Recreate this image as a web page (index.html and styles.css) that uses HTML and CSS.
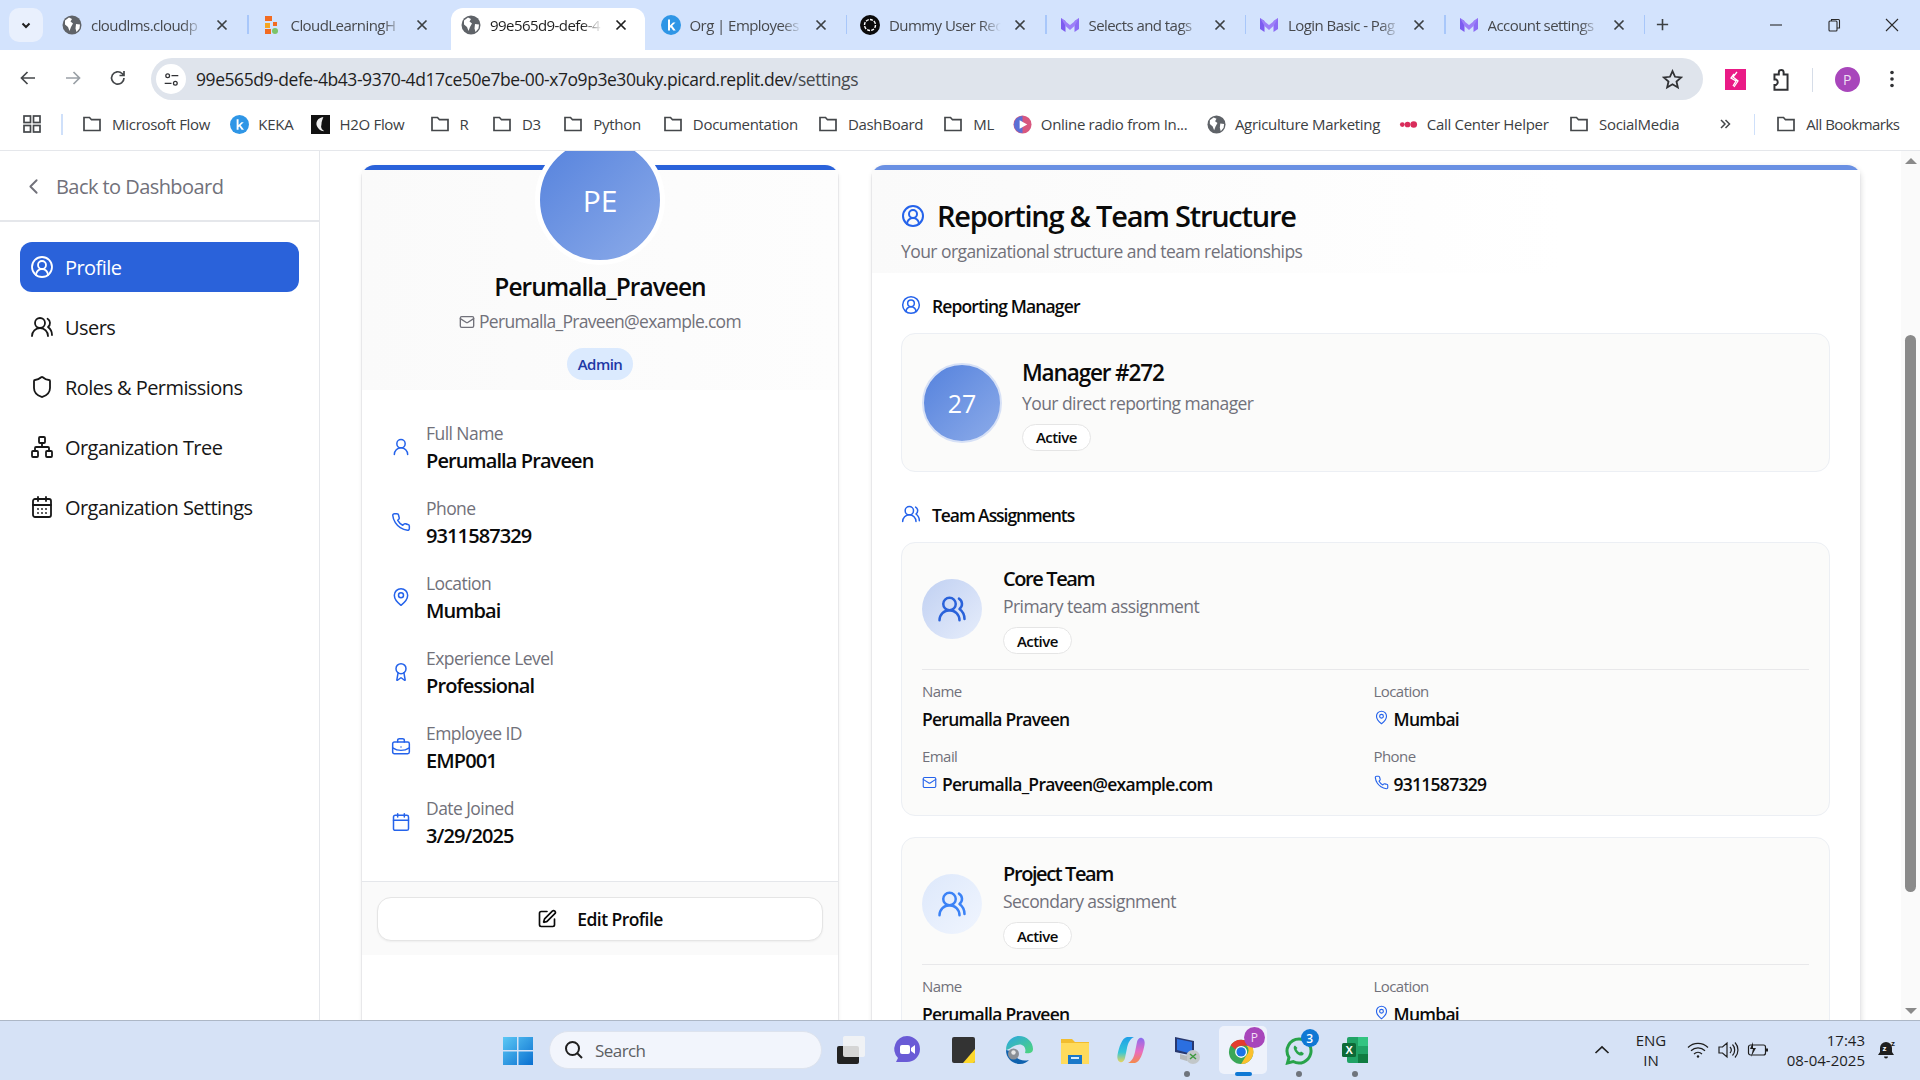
FILE: index.html
```html
<!DOCTYPE html>
<html lang="en">
<head>
<meta charset="utf-8">
<title>Settings</title>
<link rel="stylesheet" href="styles.css">
</head>
<body>
<svg class="sprite" xmlns="http://www.w3.org/2000/svg">
  <symbol id="i-circle-user" viewBox="0 0 24 24"><path d="M18 20a6 6 0 0 0-12 0"/><circle cx="12" cy="10" r="4"/><circle cx="12" cy="12" r="10"/></symbol>
  <symbol id="i-users" viewBox="0 0 24 24"><path d="M18 21a8 8 0 0 0-16 0"/><circle cx="10" cy="8" r="5"/><path d="M22 20c0-3.37-2-6.5-4-8a5 5 0 0 0-.45-8.3"/></symbol>
  <symbol id="i-shield" viewBox="0 0 24 24"><path d="M20 13c0 5-3.5 7.5-7.66 8.95a1 1 0 0 1-.67-.01C7.5 20.5 4 18 4 13V6a1 1 0 0 1 1-1c2 0 4.5-1.2 6.24-2.72a1.17 1.17 0 0 1 1.52 0C14.51 3.81 17 5 19 5a1 1 0 0 1 1 1z"/></symbol>
  <symbol id="i-network" viewBox="0 0 24 24"><rect x="16" y="16" width="6" height="6" rx="1"/><rect x="2" y="16" width="6" height="6" rx="1"/><rect x="9" y="2" width="6" height="6" rx="1"/><path d="M5 16v-3a1 1 0 0 1 1-1h12a1 1 0 0 1 1 1v3"/><path d="M12 12V8"/></symbol>
  <symbol id="i-calendar-days" viewBox="0 0 24 24"><path d="M8 2v4"/><path d="M16 2v4"/><rect width="18" height="18" x="3" y="4" rx="2"/><path d="M3 10h18"/><path d="M8 14h.01"/><path d="M12 14h.01"/><path d="M16 14h.01"/><path d="M8 18h.01"/><path d="M12 18h.01"/><path d="M16 18h.01"/></symbol>
  <symbol id="i-user" viewBox="0 0 24 24"><circle cx="12" cy="8" r="5"/><path d="M20 21a8 8 0 0 0-16 0"/></symbol>
  <symbol id="i-phone" viewBox="0 0 24 24"><path d="M22 16.92v3a2 2 0 0 1-2.18 2 19.79 19.79 0 0 1-8.63-3.07 19.5 19.5 0 0 1-6-6 19.79 19.79 0 0 1-3.07-8.67A2 2 0 0 1 4.11 2h3a2 2 0 0 1 2 1.72 12.84 12.84 0 0 0 .7 2.81 2 2 0 0 1-.45 2.11L8.09 9.91a16 16 0 0 0 6 6l1.27-1.27a2 2 0 0 1 2.11-.45 12.84 12.84 0 0 0 2.81.7A2 2 0 0 1 22 16.92z"/></symbol>
  <symbol id="i-pin" viewBox="0 0 24 24"><path d="M20 10c0 6-8 12-8 12s-8-6-8-12a8 8 0 0 1 16 0Z"/><circle cx="12" cy="10" r="3"/></symbol>
  <symbol id="i-award" viewBox="0 0 24 24"><path d="m15.477 12.89 1.515 8.526a.5.5 0 0 1-.81.47l-3.58-2.687a1 1 0 0 0-1.197 0l-3.586 2.686a.5.5 0 0 1-.81-.469l1.514-8.526"/><circle cx="12" cy="8" r="6"/></symbol>
  <symbol id="i-briefcase" viewBox="0 0 24 24"><path d="M12 12h.01"/><path d="M16 6V4a2 2 0 0 0-2-2h-4a2 2 0 0 0-2 2v2"/><path d="M22 13a18.15 18.15 0 0 1-20 0"/><rect width="20" height="14" x="2" y="6" rx="2"/></symbol>
  <symbol id="i-calendar" viewBox="0 0 24 24"><path d="M8 2v4"/><path d="M16 2v4"/><rect width="18" height="18" x="3" y="4" rx="2"/><path d="M3 10h18"/></symbol>
  <symbol id="i-mail" viewBox="0 0 24 24"><rect width="20" height="16" x="2" y="4" rx="2"/><path d="m22 7-8.97 5.7a1.94 1.94 0 0 1-2.06 0L2 7"/></symbol>
  <symbol id="i-pen" viewBox="0 0 24 24"><path d="M12 3H5a2 2 0 0 0-2 2v14a2 2 0 0 0 2 2h14a2 2 0 0 0 2-2v-7"/><path d="M18.375 2.625a1 1 0 0 1 3 3l-9.013 9.014a2 2 0 0 1-.853.505l-2.873.84a.5.5 0 0 1-.62-.62l.84-2.873a2 2 0 0 1 .506-.852z"/></symbol>
  <symbol id="i-chevron" viewBox="0 0 24 24"><path d="m15 18-6-6 6-6"/></symbol>
  <symbol id="i-close" viewBox="0 0 16 16"><path d="M3.500 3.500l9 9M12.500 3.500l-9 9"/></symbol>
  <symbol id="i-folder" viewBox="0 0 20 20"><path d="M2 16.500V3.500h5.500l2 2.200H18v10.800z"/></symbol>
  <symbol id="f-globe" viewBox="0 0 20 20"><circle cx="10" cy="10" r="9.500" fill="#5f6368"/><path d="M3 5.500l4-3 3 1.500-1.500 2.500 2.500 2-2 3.500-1.500 4-1.500-4-3-2.500z M14 9l4 .5-.5 4-3 3.500-1-3.500z" fill="#fff"/></symbol>
  <symbol id="f-k" viewBox="0 0 20 20"><circle cx="10" cy="10" r="10" fill="#2f96e6"/><path d="M7 4.500h2v6l3-3h2.500l-3.300 3.300 3.500 4.700h-2.500l-2.400-3.300-.8.8v2.500H7z" fill="#fff"/></symbol>
  <symbol id="f-m" viewBox="0 0 20 20"><path d="M1 3l4.500 3v11L1 14z" fill="#7c5cf0"/><path d="M19 3l-4.500 3v11l4.500-3z" fill="#8c6cf5"/><path d="M1 3l9 7 9-7-4.500 8L10 15l-4.500-4z" fill="#9d7ff8"/></symbol>
</svg>

<header class="tabstrip">
  <button class="tablist"><svg class="tl-chev" viewBox="0 0 12 12"><path d="M2.500 4.500L6 8l3.500-3.500"/></svg></button>
  <div class="tabs">
    <div class="tab sep"><svg class="fav"><use href="#f-globe"/></svg><span class="tab-t">cloudlms.cloudp</span><svg class="x"><use href="#i-close"/></svg></div>
    <div class="tab"><svg class="fav" viewBox="0 0 20 20"><rect x="3" y="1" width="7" height="5" fill="#f26b21"/><rect x="3" y="8" width="5" height="5" fill="#f5a623"/><rect x="3" y="14" width="6" height="5" fill="#f26b21"/><circle cx="13" cy="16" r="3" fill="#7cc46a"/><rect x="11" y="7" width="4" height="4" fill="#f26b21"/></svg><span class="tab-t">CloudLearningH</span><svg class="x"><use href="#i-close"/></svg></div>
    <div class="tab active"><svg class="fav"><use href="#f-globe"/></svg><span class="tab-t">99e565d9-defe-4</span><svg class="x"><use href="#i-close"/></svg></div>
    <div class="tab sep"><svg class="fav"><use href="#f-k"/></svg><span class="tab-t">Org | Employees</span><svg class="x"><use href="#i-close"/></svg></div>
    <div class="tab sep"><svg class="fav" viewBox="0 0 20 20"><circle cx="10" cy="10" r="10" fill="#0b0b0b"/><circle cx="10" cy="10" r="5.500" fill="none" stroke="#fff" stroke-width="1.400" stroke-dasharray="3 1.200"/></svg><span class="tab-t">Dummy User Rec</span><svg class="x"><use href="#i-close"/></svg></div>
    <div class="tab sep"><svg class="fav"><use href="#f-m"/></svg><span class="tab-t">Selects and tags</span><svg class="x"><use href="#i-close"/></svg></div>
    <div class="tab sep"><svg class="fav"><use href="#f-m"/></svg><span class="tab-t">Login Basic - Pag</span><svg class="x"><use href="#i-close"/></svg></div>
    <div class="tab sep"><svg class="fav"><use href="#f-m"/></svg><span class="tab-t">Account settings</span><svg class="x"><use href="#i-close"/></svg></div>
  </div>
  <svg class="newtab" viewBox="0 0 16 16"><path d="M8 2v12M2 8h12"/></svg>
  <div class="winctl">
    <svg class="wc" viewBox="0 0 16 16"><path d="M2 8h12"/></svg>
    <svg class="wc" viewBox="0 0 16 16"><rect x="3" y="4" width="8" height="10" rx="1"/><path d="M5.500 4V2.500h7a1 1 0 0 1 1 1V11H11"/></svg>
    <svg class="wc" viewBox="0 0 16 16"><path d="M2 2l12 12M14 2L2 14"/></svg>
  </div>
</header>

<nav class="toolbar">
  <svg class="navi back" viewBox="0 0 20 20"><path d="M17 10H4M9.500 4L3.500 10l6 6"/></svg>
  <svg class="navi fwd" viewBox="0 0 20 20"><path d="M3 10h13M10.500 4l6 6-6 6"/></svg>
  <svg class="navi reload" viewBox="0 0 20 20"><path d="M16 10a6.200 6.200 0 1 1-1.900-4.500L16 7.300M16 3v4.500h-4.500"/></svg>
  <div class="omnibox">
    <span class="chip"><svg class="chip-i" viewBox="0 0 20 20"><circle cx="5.500" cy="5.500" r="2.200"/><path d="M10 5.500h8M2 14.500h8"/><circle cx="14.500" cy="14.500" r="2.200"/></svg></span>
    <span class="url">99e565d9-defe-4b43-9370-4d17ce50e7be-00-x7o9p3e30uky.picard.replit.dev<span class="url-path">/settings</span></span>
    <svg class="star" viewBox="0 0 20 20"><path d="M10 2l2.400 5.400 5.800.6-4.400 3.900 1.300 5.700L10 14.600l-5.100 3 1.300-5.700L1.800 8l5.800-.6z"/></svg>
  </div>
  <svg class="ext-pink" viewBox="0 0 21 21"><rect width="21" height="21" fill="#ea1a86"/><path d="M12 3L8 8l5 4-4 6M9 5L6 9l5 3-3 5" fill="none" stroke="#fff" stroke-width="1.300"/></svg>
  <svg class="puzzle" viewBox="0 0 22 22"><path d="M5 6h4V4a2.200 2.200 0 0 1 4.400 0v2H17v14H5v-4.500h1.500a2.800 2.800 0 0 0 0-5H5z"/></svg>
  <span class="tb-sep"></span>
  <span class="avatar-p">P</span>
  <svg class="kebab" viewBox="0 0 6 20"><circle cx="3" cy="3.500" r="1.800"/><circle cx="3" cy="10" r="1.800"/><circle cx="3" cy="16.500" r="1.800"/></svg>
</nav>

<div class="bookmarks">
  <svg class="apps" viewBox="0 0 18 18"><rect x="1" y="1" width="6.500" height="6.500"/><rect x="10.500" y="1" width="6.500" height="6.500"/><rect x="1" y="10.500" width="6.500" height="6.500"/><rect x="10.500" y="10.500" width="6.500" height="6.500"/></svg>
  <span class="bm-sep"></span>
  <span class="bm b1"><svg class="bf"><use href="#i-folder"/></svg>Microsoft Flow</span>
  <span class="bm b2"><svg class="bi"><use href="#f-k"/></svg>KEKA</span>
  <span class="bm b3"><svg class="bi" viewBox="0 0 20 20"><rect width="20" height="20" fill="#111"/><path d="M13 2c-6 1-8 5-7 9 1 3 4 6 8 6-3-2-4-4-3-7 0-3 1-5 2-8z" fill="#eee"/></svg>H2O Flow</span>
  <span class="bm b4"><svg class="bf"><use href="#i-folder"/></svg>R</span>
  <span class="bm b5"><svg class="bf"><use href="#i-folder"/></svg>D3</span>
  <span class="bm b6"><svg class="bf"><use href="#i-folder"/></svg>Python</span>
  <span class="bm b7"><svg class="bf"><use href="#i-folder"/></svg>Documentation</span>
  <span class="bm b8"><svg class="bf"><use href="#i-folder"/></svg>DashBoard</span>
  <span class="bm b9"><svg class="bf"><use href="#i-folder"/></svg>ML</span>
  <span class="bm b10"><svg class="bi" viewBox="0 0 20 20"><circle cx="10" cy="10" r="9.500" fill="#d8577f"/><path d="M1 10a9 9 0 0 1 9-9v18a9 9 0 0 1-9-9z" fill="#5b6fd6"/><path d="M7 5.500l8 4.500-8 4.500z" fill="#fff"/></svg>Online radio from In...</span>
  <span class="bm b11"><svg class="bi"><use href="#f-globe"/></svg>Agriculture Marketing</span>
  <span class="bm b12"><svg class="bi" viewBox="0 0 20 20"><circle cx="3.500" cy="10" r="2.500" fill="#d92c5b"/><circle cx="9" cy="10" r="3" fill="#d92c5b"/><circle cx="15.500" cy="10" r="3.500" fill="#d92c5b"/></svg>Call Center Helper</span>
  <span class="bm b13"><svg class="bf"><use href="#i-folder"/></svg>SocialMedia</span>
  <svg class="bm-more" viewBox="0 0 12 12"><path d="M2 2l4 4-4 4M6.500 2l4 4-4 4"/></svg>
  <span class="bm-sep sep2"></span>
  <span class="bm b14"><svg class="bf"><use href="#i-folder"/></svg>All Bookmarks</span>
</div>

<div class="app">
  <aside class="sidebar">
    <div class="back-row"><svg class="ic i-back"><use href="#i-chevron"/></svg><span>Back to Dashboard</span></div>
    <div class="side-nav">
      <a class="nav-item on"><svg class="ic i-nav"><use href="#i-circle-user"/></svg>Profile</a>
      <a class="nav-item"><svg class="ic i-nav"><use href="#i-users"/></svg>Users</a>
      <a class="nav-item"><svg class="ic i-nav"><use href="#i-shield"/></svg>Roles &amp; Permissions</a>
      <a class="nav-item"><svg class="ic i-nav"><use href="#i-network"/></svg>Organization Tree</a>
      <a class="nav-item"><svg class="ic i-nav"><use href="#i-calendar-days"/></svg>Organization Settings</a>
    </div>
  </aside>

  <main class="main">
    <section class="card left">
      <div class="prof-head">
        <div class="prof-av">PE</div>
        <h2 class="prof-name">Perumalla_Praveen</h2>
        <p class="prof-mail"><svg class="ic i-mail-h"><use href="#i-mail"/></svg>Perumalla_Praveen@example.com</p>
        <span class="role">Admin</span>
      </div>
      <div class="prof-rows">
        <div class="row"><svg class="ic i-blue"><use href="#i-user"/></svg><div><div class="lab">Full Name</div><div class="val">Perumalla Praveen</div></div></div>
        <div class="row"><svg class="ic i-blue"><use href="#i-phone"/></svg><div><div class="lab">Phone</div><div class="val">9311587329</div></div></div>
        <div class="row"><svg class="ic i-blue"><use href="#i-pin"/></svg><div><div class="lab">Location</div><div class="val">Mumbai</div></div></div>
        <div class="row"><svg class="ic i-blue"><use href="#i-award"/></svg><div><div class="lab">Experience Level</div><div class="val">Professional</div></div></div>
        <div class="row"><svg class="ic i-blue"><use href="#i-briefcase"/></svg><div><div class="lab">Employee ID</div><div class="val">EMP001</div></div></div>
        <div class="row"><svg class="ic i-blue"><use href="#i-calendar"/></svg><div><div class="lab">Date Joined</div><div class="val">3/29/2025</div></div></div>
      </div>
      <div class="prof-foot">
        <button class="edit"><svg class="ic i-edit"><use href="#i-pen"/></svg>Edit Profile</button>
      </div>
    </section>

    <section class="card right">
      <div class="r-head">
        <h1 class="r-title"><svg class="ic i-title"><use href="#i-circle-user"/></svg>Reporting &amp; Team Structure</h1>
        <p class="r-sub">Your organizational structure and team relationships</p>
      </div>
      <div class="r-body">
        <h3 class="sec"><svg class="ic i-sec"><use href="#i-circle-user"/></svg>Reporting Manager</h3>
        <div class="box mgr">
          <div class="mgr-av">27</div>
          <div class="who">
            <div class="mgr-name">Manager #272</div>
            <div class="desc">Your direct reporting manager</div>
            <span class="pill">Active</span>
          </div>
        </div>

        <h3 class="sec sec2"><svg class="ic i-sec"><use href="#i-users"/></svg>Team Assignments</h3>
        <div class="box team">
          <div class="team-head">
            <div class="team-av a1"><svg class="ic i-team"><use href="#i-users"/></svg></div>
            <div class="who">
              <div class="team-name">Core Team</div>
              <div class="desc">Primary team assignment</div>
              <span class="pill">Active</span>
            </div>
          </div>
          <div class="grid">
            <div><div class="g-lab">Name</div><div class="g-val">Perumalla Praveen</div></div>
            <div><div class="g-lab">Location</div><div class="g-val"><svg class="ic i-g"><use href="#i-pin"/></svg>Mumbai</div></div>
            <div><div class="g-lab">Email</div><div class="g-val"><svg class="ic i-g"><use href="#i-mail"/></svg>Perumalla_Praveen@example.com</div></div>
            <div><div class="g-lab">Phone</div><div class="g-val"><svg class="ic i-g"><use href="#i-phone"/></svg>9311587329</div></div>
          </div>
        </div>

        <div class="box team second">
          <div class="team-head">
            <div class="team-av a2"><svg class="ic i-team lighter"><use href="#i-users"/></svg></div>
            <div class="who">
              <div class="team-name">Project Team</div>
              <div class="desc">Secondary assignment</div>
              <span class="pill">Active</span>
            </div>
          </div>
          <div class="grid">
            <div><div class="g-lab">Name</div><div class="g-val">Perumalla Praveen</div></div>
            <div><div class="g-lab">Location</div><div class="g-val"><svg class="ic i-g"><use href="#i-pin"/></svg>Mumbai</div></div>
          </div>
        </div>
      </div>
    </section>
  </main>

  <div class="scrollbar">
    <span class="arrow up"></span>
    <span class="thumb"></span>
    <span class="arrow down"></span>
  </div>
</div>

<footer class="taskbar">
  <svg class="winlogo" viewBox="0 0 30 30"><defs><linearGradient id="wl" x1="0" y1="0" x2="1" y2="1"><stop offset="0" stop-color="#5cc8f5"/><stop offset="1" stop-color="#0a6fd0"/></linearGradient></defs><path d="M0 1h14v13H0zM15.500 1H30v13H15.500zM0 15.500h14V29H0zM15.500 15.500H30V29H15.500z" fill="url(#wl)"/></svg>
  <div class="search"><svg class="s-ic" viewBox="0 0 20 20"><circle cx="8.500" cy="8.500" r="6.500"/><path d="M13 13l5 5"/></svg>Search</div>
  <div class="apps-row">
    <span class="cell"><svg class="tbi" viewBox="0 0 30 30"><rect x="1" y="11" width="22" height="18" rx="2" fill="#222"/><rect x="7" y="1" width="22" height="21" rx="2" fill="#f4f4f4" opacity=".85"/></svg></span>
    <span class="cell"><svg class="tbi" viewBox="0 0 30 30"><path d="M15 1a13 13 0 0 1 0 26H4l2-4A13 13 0 0 1 15 1z" fill="#6a5bd6"/><rect x="8" y="10" width="10" height="9" rx="2" fill="#fff"/><path d="M19 13l4-3v9l-4-3z" fill="#fff"/></svg></span>
    <span class="cell"><svg class="tbi" viewBox="0 0 30 30"><rect x="4" y="2" width="23" height="26" rx="2" fill="#333"/><path d="M27 14v12a2 2 0 0 1-2 2H15z" fill="#fdd72c"/></svg></span>
    <span class="cell"><svg class="tbi" viewBox="0 0 30 30"><defs><linearGradient id="ed" x1="0" y1="0" x2="1" y2="1"><stop offset="0" stop-color="#2ba5e4"/><stop offset="1" stop-color="#4fd67a"/></linearGradient></defs><path d="M2 15C2 6 9 1 15 1c8 0 14 6 14 13 0 4-4 5-8 4 2-6-3-10-8-8-5 1-8 5-11 5z" fill="url(#ed)"/><path d="M2 15c0 8 6 14 14 14 4 0 7-2 9-4-7 2-14-1-15-8z" fill="#0f62ae"/><circle cx="9.500" cy="19" r="5.500" fill="#8a8f96"/><circle cx="9.500" cy="17.500" r="2.200" fill="#e8e8e8"/></svg></span>
    <span class="cell"><svg class="tbi" viewBox="0 0 30 30"><path d="M1 4h11l3 3h14v22H1z" fill="#f2bd2f"/><path d="M1 8h28v21H1z" fill="#ffdb5c"/><rect x="8" y="20" width="14" height="9" fill="#1a78c9"/><rect x="11" y="22" width="8" height="2" fill="#d7ecfb"/></svg></span>
    <span class="cell"><svg class="tbi" viewBox="0 0 30 30"><defs><linearGradient id="co1" x1="0" y1="0" x2="0" y2="1"><stop offset="0" stop-color="#1f9fe8"/><stop offset=".6" stop-color="#35c6d8"/><stop offset="1" stop-color="#e8d45a"/></linearGradient><linearGradient id="co2" x1="0" y1="0" x2="0" y2="1"><stop offset="0" stop-color="#8a6cf0"/><stop offset=".55" stop-color="#e86cc0"/><stop offset="1" stop-color="#f58a4a"/></linearGradient></defs><path d="M11 2h7c-4 2-6 6-7 11l-2 10c-.6 3-3 5-5 4-2.500-1-3-4-2.500-7C3 12 6 3 11 2z" fill="url(#co1)"/><path d="M19 28h-7c4-2 6-6 7-11l2-10c.6-3 3-5 5-4 2.500 1 3 4 2.500 7-1.500 8-4.500 17-9.500 18z" fill="url(#co2)"/></svg></span>
    <span class="cell"><svg class="tbi" viewBox="0 0 30 30"><path d="M3 2l19 4v15L3 17z" fill="#28386f"/><path d="M5 4l15 3v12L5 15z" fill="#2b6fe0"/><circle cx="21" cy="22" r="7" fill="#c2c7c9"/><path d="M18 24l6-5M18 19l6 5" stroke="#3d9a3f" stroke-width="1.500"/><path d="M8 19l7 2v5l-7-2z" fill="#b5b9bc"/></svg><i class="dot"></i></span>
    <span class="cell act"><svg class="tbi chrome" viewBox="0 0 32 32"><circle cx="14" cy="18" r="13" fill="#3aa757"/><path d="M14 5a13 13 0 0 1 11.300 6.500H14a6.500 6.500 0 0 0-6 4L2.800 11A13 13 0 0 1 14 5z" fill="#e33b2e"/><path d="M25.300 11.500A13 13 0 0 1 14 31l5.600-9.500a6.500 6.500 0 0 0 0-10z" fill="#fbc02d"/><circle cx="14" cy="18" r="6.400" fill="#fff"/><circle cx="14" cy="18" r="5" fill="#1a73e8"/></svg><b class="badge-p">P</b><i class="bar"></i></span>
    <span class="cell"><svg class="tbi" viewBox="0 0 30 30"><path d="M15 4a12 12 0 0 0-10 18.500L3.500 28l5.700-1.500A12 12 0 1 0 15 4z" fill="none" stroke="#28a34a" stroke-width="3"/><path d="M11 10.500c-2 1-1.500 3.500.5 6.500s5 4 6.500 3.500 2-2 1.500-2.500l-2.500-1.500-1 1c-1.500-.5-3-2-3.500-3.500l1-1z" fill="#28a34a"/></svg><b class="badge-n">3</b><i class="dot"></i></span>
    <span class="cell"><svg class="tbi" viewBox="0 0 30 30"><rect x="7" y="2" width="21" height="26" rx="2" fill="#21a366"/><rect x="18" y="2" width="10" height="9" fill="#33c481"/><rect x="18" y="19" width="10" height="9" fill="#107c41"/><rect x="2" y="8" width="14" height="14" rx="1.500" fill="#0d6a37"/><text x="9" y="19" class="xl">X</text></svg><i class="dot"></i></span>
  </div>
  <div class="tray">
    <svg class="tr-chev" viewBox="0 0 16 10"><path d="M1.500 8L8 2l6.500 6"/></svg>
    <div class="lang"><span>ENG</span><span>IN</span></div>
    <svg class="tr-ic wifi" viewBox="0 0 22 18"><path d="M1 6.500a14 14 0 0 1 20 0M4 9.800a10 10 0 0 1 14 0M7 13a6 6 0 0 1 8 0"/><circle cx="11" cy="15.500" r="1.200" class="fillc"/></svg>
    <svg class="tr-ic vol" viewBox="0 0 22 18"><path d="M2 6h3.500L10 2v14l-4.500-4H2zM13 6a4.500 4.500 0 0 1 0 6M15.500 3.500a8 8 0 0 1 0 11M18 1.500a11 11 0 0 1 0 15"/></svg>
    <svg class="tr-ic bat" viewBox="0 0 22 18"><rect x="1.500" y="4" width="17" height="10" rx="2"/><path d="M19 7.500h2v3h-2" class="fillc"/><path d="M6 1L3 8h3l-2 8 5-9H6z" class="fillc"/></svg>
    <div class="clock"><span>17:43</span><span>08-04-2025</span></div>
    <svg class="bell" viewBox="0 0 20 20"><path d="M10 2a6 6 0 0 0-6 6v4l-2 3h16l-2-3V8a6 6 0 0 0-6-6z"/><path d="M8 16.500a2 2 0 0 0 4 0z"/><text x="6.500" y="11" class="zz">z</text><text x="15" y="6" class="zz2">z</text></svg>
  </div>
</footer>
</body>
</html>
```

FILE: styles.css
```css
* { box-sizing: border-box; }
html, body { margin: 0; padding: 0; }
body {
  width: 1920px; height: 1080px; overflow: hidden;
  display: flex; flex-direction: column;
  font-family: "Open Sans", "Noto Sans", sans-serif;
  letter-spacing: -0.035em;
  color: #0a0a0a; background: #fff;
}
h1, h2, h3, p { margin: 0; font: inherit; letter-spacing: inherit; }
button { font: inherit; letter-spacing: inherit; color: inherit; }
.sprite { display: none; }

/* Tab strip */
.tabstrip { height: 50px; flex: none; background: #d3e3fd; display: flex; align-items: flex-start; position: relative; }
.tablist { width: 34px; height: 34px; margin: 8px 0 0 9px; padding: 0; border: 0; border-radius: 10px; background: #e9f0fd; display: flex; align-items: center; justify-content: center; }
.tl-chev { width: 12px; height: 12px; fill: none; stroke: #1f1f1f; stroke-width: 2; }
.tabs { display: flex; margin-left: 6px; height: 50px; }
.tab { width: 199.500px; height: 50px; display: flex; align-items: center; position: relative; padding: 0 0 0 13px; font-size: 15px; color: #47494d; }
.tab.sep::after { content: ""; position: absolute; right: 0; top: 15px; height: 19px; width: 1.500px; background: #a8c7fa; }
.tab.active { color: #1f1f1f; }
.tab.active::before { content: ""; position: absolute; left: 3px; right: 3px; top: 8px; bottom: 0; background: #fff; border-radius: 12px 12px 0 0; }
.tab.active > * { position: relative; z-index: 1; }
.fav { width: 20px; height: 20px; flex: none; }
.tab-t { width: 112px; margin-left: 9px; white-space: nowrap; overflow: hidden; -webkit-mask-image: linear-gradient(to right, #000 82%, transparent); mask-image: linear-gradient(to right, #000 82%, transparent); }
.x { width: 16px; height: 16px; margin-left: 11px; fill: none; stroke: #3c4043; stroke-width: 1.700; flex: none; }
.tab.active .x { stroke: #1f1f1f; }
.newtab { width: 15px; height: 15px; margin: 17px 0 0 10px; fill: none; stroke: #3c4043; stroke-width: 1.700; flex: none; }
.winctl { margin-left: auto; display: flex; padding: 17px 20px 0 0; gap: 42px; }
.wc { width: 16px; height: 16px; fill: none; stroke: #2b2b2b; stroke-width: 1.100; }

/* Toolbar */
.toolbar { height: 50px; flex: none; background: #fff; border-radius: 10px 10px 0 0; display: flex; align-items: flex-start; padding-top: 8px; position: relative; }
.navi { width: 20px; height: 20px; margin-top: 10px; fill: none; stroke: #44474a; stroke-width: 1.700; flex: none; }
.back { margin-left: 18px; }
.fwd { margin-left: 25px; stroke: #9aa0a6; }
.reload { margin-left: 25px; }
.omnibox { width: 1552px; height: 42px; margin-left: 23px; background: #dfe4ec; border-radius: 21px; display: flex; align-items: center; padding-left: 5px; }
.chip { width: 30px; height: 30px; border-radius: 50%; background: #fff; display: flex; align-items: center; justify-content: center; }
.chip-i { width: 17px; height: 17px; fill: none; stroke: #303134; stroke-width: 1.500; }
.url { margin-left: 10px; font-size: 17.500px; letter-spacing: -0.025em; color: #1f1f1f; white-space: nowrap; }
.url-path { color: #45484d; }
.star { width: 21px; height: 21px; margin-left: auto; margin-right: 20px; fill: none; stroke: #303134; stroke-width: 1.700; }
.ext-pink { width: 21px; height: 21px; margin: 11px 0 0 21.500px; flex: none; }
.puzzle { width: 24px; height: 24px; margin: 10px 0 0 23px; fill: none; stroke: #303134; stroke-width: 1.800; flex: none; }
.tb-sep { width: 1px; height: 24px; margin: 10px 0 0 19px; background: #d6dde8; flex: none; }
.avatar-p { width: 25px; height: 25px; margin: 9px 0 0 22px; border-radius: 50%; background: #a846bb; color: #eedff2; font-size: 14px; display: flex; align-items: center; justify-content: center; flex: none; }
.kebab { width: 6px; height: 20px; margin: 11px 0 0 29.500px; fill: #303134; flex: none; }

/* Bookmarks */
.bookmarks { height: 50px; flex: none; background: #fff; display: flex; align-items: center; padding-bottom: 2px; font-size: 15px; letter-spacing: -0.02em; color: #3c4043; position: relative; }
.apps { width: 18px; height: 18px; margin-left: 23px; fill: none; stroke: #44474a; stroke-width: 1.700; flex: none; }
.bm-sep { width: 1.500px; height: 21px; margin-left: 20px; background: #cfe0fa; flex: none; }
.bm { display: flex; align-items: center; white-space: nowrap; flex: none; }
.bf { width: 20px; height: 20px; fill: none; stroke: #44474a; stroke-width: 1.700; margin-right: 10px; flex: none; }
.bi { width: 19px; height: 19px; margin-right: 9px; flex: none; }
.b1 { margin-left: 19.600px; } .b2 { margin-left: 20.200px; } .b3 { margin-left: 18.100px; } .b4 { margin-left: 25.200px; } .b5 { margin-left: 23.400px; }
.b6 { margin-left: 22.500px; } .b7 { margin-left: 22px; } .b8 { margin-left: 20.100px; } .b9 { margin-left: 20.100px; } .b10 { margin-left: 18.800px; }
.b11 { margin-left: 19.500px; } .b12 { margin-left: 18.800px; } .b13 { margin-left: 20.500px; }
.bm-more { width: 12px; height: 12px; margin-left: 39.500px; fill: none; stroke: #44474a; stroke-width: 1.500; flex: none; }
.sep2 { margin-left: 23px; }
.b14 { margin-left: 21px; letter-spacing: -0.035em; }

/* App */
.app { flex: 1; min-height: 0; display: flex; border-top: 1px solid #e5e7eb; background: #fff; }
.ic { fill: none; stroke: currentColor; stroke-width: 2; stroke-linecap: round; stroke-linejoin: round; flex: none; }

.sidebar { width: 320px; flex: none; border-right: 1px solid #e5e7eb; background: #fff; }
.back-row { height: 71px; border-bottom: 2px solid #e5e7eb; display: flex; align-items: center; padding: 2px 0 0 21px; color: #71717a; font-size: 20px; }
.i-back { width: 25px; height: 25px; margin-right: 10px; stroke-width: 1.800; }
.side-nav { padding: 20px 20px 0; display: flex; flex-direction: column; gap: 10px; }
.nav-item { height: 50px; display: flex; align-items: center; gap: 11px; padding-left: 10px; font-size: 20px; border-radius: 12px; color: #171717; }
.nav-item.on { background: #2a62da; color: #fff; }
.i-nav { width: 24px; height: 24px; stroke-width: 1.800; }

.main { flex: 1; min-width: 0; overflow: hidden; display: grid; grid-template-columns: 478px 990px; column-gap: 32px; padding: 14px 0 0 41px; align-items: stretch; background: #fff; }
.card { background: #fff; border: 1px solid #e8e8ea; border-top: 5px solid #2a62da; border-radius: 14px 14px 0 0; box-shadow: 0 1px 4px rgba(0,0,0,.06); min-height: 900px; }
.right { border-top-color: #6a90e3; box-shadow: 1px 1px 5px rgba(0,0,0,.1); }

/* Left card */
.prof-head { height: 220px; background: linear-gradient(to right, #fafafa, #fdfdfd); display: flex; flex-direction: column; align-items: center; }
.prof-av { width: 130px; height: 130px; margin-top: -35px; flex: none; border: 5px solid #fff; border-radius: 50%; background: linear-gradient(135deg, #5582dd, #8cabe9); color: #fff; font-size: 30px; display: flex; align-items: center; justify-content: center; letter-spacing: 0; }
.prof-name { margin-top: 4px; font-size: 24.500px; line-height: 35px; font-weight: 600; letter-spacing: -0.04em; }
.prof-mail { margin-top: 5px; font-size: 17.500px; line-height: 25px; color: #71717a; display: flex; align-items: center; gap: 4px; letter-spacing: -0.04em; }
.i-mail-h { width: 16px; height: 16px; }
.role { margin-top: 14px; height: 32px; padding: 0 11px; border-radius: 16px; background: #dbeafe; color: #2138a5; font-size: 15px; font-weight: 600; display: flex; align-items: center; }
.prof-rows { padding: 31px 26px 0 29px; height: 491px; display: flex; flex-direction: column; gap: 20px; }
.row { display: flex; align-items: center; gap: 15px; height: 55px; }
.i-blue { width: 20px; height: 20px; margin-top: -4px; color: #2563eb; stroke-width: 1.800; }
.lab { font-size: 17.500px; line-height: 25px; color: #71717a; }
.val { font-size: 20px; line-height: 30px; font-weight: 600; letter-spacing: -0.045em; }
.prof-foot { border-top: 1px solid #e5e7eb; background: #fafafa; padding: 15px; height: 74px; }
.edit { width: 100%; height: 44px; background: #fff; border: 1px solid #e5e5e5; border-radius: 14px; font-size: 17.500px; font-weight: 600; display: flex; align-items: center; justify-content: center; gap: 20px; box-shadow: 0 1px 2px rgba(0,0,0,.05); padding: 0 0 0 6px; }
.i-edit { width: 20px; height: 20px; margin-left: -6px; }

/* Right card */
.r-head { height: 103px; padding: 28px 24px 0 30px; background: linear-gradient(to right, #fafafa, #fff 70%); }
.r-title { display: flex; align-items: center; gap: 12px; font-size: 29px; line-height: 36px; font-weight: 600; margin-left: -1px; letter-spacing: -0.043em; }
.i-title { width: 24px; height: 24px; color: #2563eb; }
.r-sub { margin-top: 5px; font-size: 17.500px; line-height: 25px; color: #71717a; margin-left: -1px; }
.r-body { padding: 21px 30px 0 29px; }
.sec { display: flex; align-items: center; gap: 11px; font-size: 17.500px; line-height: 25px; font-weight: 600; letter-spacing: -0.05em; }
.sec2 { margin-top: 31px; letter-spacing: -0.06em; }
.i-sec { width: 20px; height: 20px; color: #2563eb; stroke-width: 1.800; margin-top: -3px; }
.box { margin-top: 14px; border: 1px solid #eceff4; border-radius: 14px; background: #fbfbfa; }
.mgr { height: 139px; padding: 0 20px; display: flex; align-items: center; gap: 20px; }
.mgr-av { width: 80px; height: 80px; flex: none; border: 2px solid #d7e1f6; border-radius: 50%; background: linear-gradient(135deg, #5582dd, #8cabe9); color: #fff; font-size: 25px; display: flex; align-items: center; justify-content: center; letter-spacing: 0; }
.who { display: flex; flex-direction: column; align-items: flex-start; }
.mgr-name { padding-top: 2px; font-size: 22.500px; line-height: 32px; font-weight: 600; letter-spacing: -0.05em; }
.desc { margin-top: 2px; font-size: 17.500px; line-height: 25px; color: #71717a; }
.pill { margin-top: 8px; height: 27px; padding: 0 13px; border: 1px solid #e5e5e5; border-radius: 14px; background: #fff; font-size: 15px; font-weight: 600; display: flex; align-items: center; }
.team { height: 274px; padding: 22px 20px 0; overflow: hidden; }
.team.second { margin-top: 21px; height: 275px; }
.team-head { display: flex; align-items: center; gap: 21px; padding-bottom: 15px; border-bottom: 1px solid #e8e8ea; }
.team-name { font-size: 20px; line-height: 28px; font-weight: 600; letter-spacing: -0.07em; }
.team-head .desc { margin-top: 1px; }
.team-av { width: 60px; height: 60px; flex: none; margin-top: -2px; border-radius: 50%; display: flex; align-items: center; justify-content: center; color: #2a62da; }
.a1 { background: linear-gradient(135deg, #c0d0f2, #e6edfb); }
.a2 { background: linear-gradient(135deg, #dde8fb, #f0f5fe); }
.i-team { width: 30px; height: 30px; }
.lighter { color: #3b82f6; }
.grid { display: grid; grid-template-columns: 1fr 1fr; column-gap: 16px; row-gap: 14px; padding-top: 11px; }
.g-lab { font-size: 15px; line-height: 21px; color: #71717a; }
.g-val { margin-top: 4px; font-size: 17.500px; line-height: 26px; font-weight: 600; letter-spacing: -0.042em; display: flex; align-items: center; gap: 5px; }
.i-g { width: 15px; height: 15px; color: #2563eb; stroke-width: 1.800; margin-top: -3px; }

/* Scrollbar */
.scrollbar { width: 19px; flex: none; background: #fafafa; position: relative; display: flex; flex-direction: column; align-items: center; }
.arrow { position: absolute; left: 4px; width: 0; height: 0; border-left: 6px solid transparent; border-right: 6px solid transparent; }
.up { top: 7px; border-bottom: 6px solid #8a8a8a; }
.down { bottom: 6px; border-top: 6px solid #8a8a8a; }
.thumb { width: 11px; height: 557px; margin-top: 184px; border-radius: 6px; background: #8a8a8a; }

/* Taskbar */
.taskbar { height: 60px; flex: none; background: #d6e2f6; border-top: 1px solid #adb7c6; display: flex; align-items: flex-start; position: relative; }
.winlogo { width: 30px; height: 30px; margin: 15px 0 0 503px; flex: none; }
.search { width: 273px; height: 38px; margin: 10px 0 0 16px; border-radius: 19px; background: #f2f5fc; border: 1px solid #dde3ee; display: flex; align-items: center; padding-left: 14px; gap: 11px; font-size: 17px; color: #5d5f63; flex: none; }
.s-ic { width: 20px; height: 20px; fill: none; stroke: #1f1f1f; stroke-width: 2; }
.apps-row { display: flex; flex: none; margin-left: 0.500px; }
.cell { width: 56px; height: 59px; position: relative; display: flex; align-items: flex-start; justify-content: center; padding-top: 14px; flex: none; }
.tbi { width: 30px; height: 30px; }
.cell.act::before { content: ""; position: absolute; left: 4px; right: 4px; top: 5px; bottom: 6px; background: #eef2fb; border-radius: 5px; }
.chrome { position: relative; }
.dot { position: absolute; left: 25px; bottom: 3px; width: 6px; height: 6px; border-radius: 50%; background: #6f747c; }
.bar { position: absolute; left: 20px; bottom: 4px; width: 17px; height: 4px; border-radius: 2px; background: #0f78d4; }
.badge-p { position: absolute; left: 29px; top: 6px; width: 21px; height: 21px; border-radius: 50%; background: #a846bb; color: #f2dff5; font-size: 12px; font-weight: 400; display: flex; align-items: center; justify-content: center; }
.badge-n { position: absolute; left: 30px; top: 8px; width: 18px; height: 18px; border-radius: 50%; background: #0f78d4; color: #fff; font-size: 12px; font-weight: 600; display: flex; align-items: center; justify-content: center; }
.xl { font: 700 11px "Liberation Sans", sans-serif; fill: #fff; text-anchor: middle; }
.tray { position: absolute; left: 1594px; top: 0; width: 326px; height: 57px; display: flex; align-items: center; color: #1f1f1f; }
.tr-chev { width: 16px; height: 10px; fill: none; stroke: #1f1f1f; stroke-width: 1.700; flex: none; }
.lang { width: 60px; margin-left: 11px; display: flex; flex-direction: column; align-items: center; font-size: 15px; line-height: 20px; letter-spacing: 0; }
.tr-ic { width: 22px; height: 18px; fill: none; stroke: #1f1f1f; stroke-width: 1.200; flex: none; }
.fillc { fill: #1f1f1f; stroke: none; }
.wifi { margin-left: 5.500px; }
.vol { margin-left: 8px; }
.bat { margin-left: 8px; }
.clock { width: 90px; margin-left: 6.500px; display: flex; flex-direction: column; align-items: flex-end; font-size: 15px; line-height: 20px; letter-spacing: 0; }
.bell { width: 20px; height: 20px; margin-left: 11px; fill: #1f1f1f; flex: none; }
.zz { font: 700 8px "Liberation Sans", sans-serif; fill: #fff; }
.zz2 { font: 700 8px "Liberation Sans", sans-serif; fill: #1f1f1f; }
```
